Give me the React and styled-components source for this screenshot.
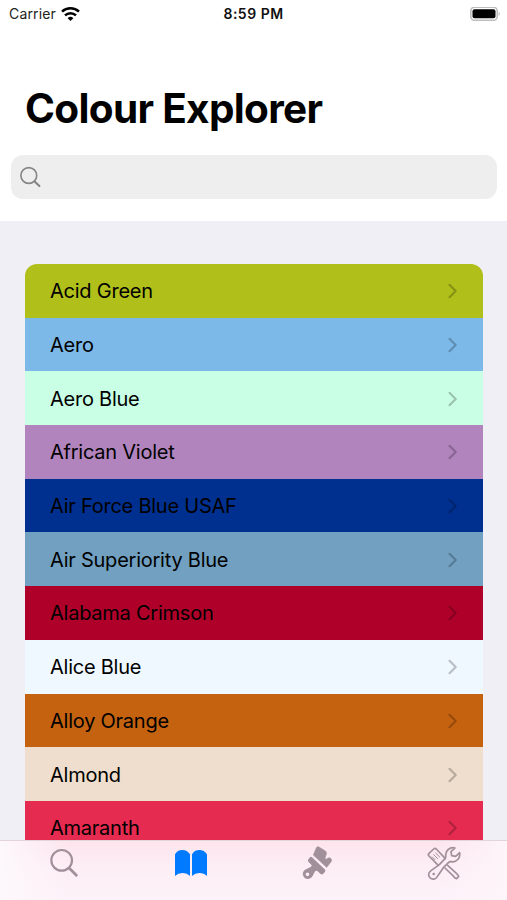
import React from "react";
import styled, { createGlobalStyle } from "styled-components";

const GlobalStyle = createGlobalStyle`
  * {
    box-sizing: border-box;
  }
  body {
    margin: 0;
    font-family: Inter, "Liberation Sans", sans-serif;
    color: #000;
    overflow: hidden;
  }
  svg {
    display: block;
    flex-shrink: 0;
  }
`;

const Screen = styled.div`
  display: flex;
  flex-direction: column;
  width: 100%;
  height: 100vh;
  overflow: hidden;
  background-color: #f0eff5;
`;

const Header = styled.header`
  flex: 0 0 221px;
  background-color: #fff;
`;

const StatusBar = styled.div`
  display: grid;
  grid-template-columns: 1fr auto 1fr;
  align-items: center;
  height: 28px;
  padding: 0 7px 0 9px;
  line-height: 28px;
`;

const Carrier = styled.div`
  display: flex;
  align-items: center;
  gap: 5px;
  font-size: 14px;
  letter-spacing: 0.15px;
  color: #222;
`;

const Clock = styled.div`
  margin-right: 2px;
  font-size: 14px;
  font-weight: 600;
  letter-spacing: 0.5px;
  color: #111;
`;

const Power = styled.div`
  display: flex;
  justify-content: flex-end;
`;

const Title = styled.h1`
  margin: 56px 0 0 25px;
  font-size: 40.5px;
  font-weight: 700;
  line-height: 50px;
  letter-spacing: -0.68px;
  white-space: nowrap;
`;

const SearchField = styled.div`
  display: flex;
  align-items: center;
  height: 44px;
  margin: 21px 10px 0 11px;
  padding-left: 8px;
  border-radius: 12px;
  background-color: #eee;
`;

const List = styled.main`
  flex: 1;
  min-height: 0;
  overflow: hidden;
  padding: 43px 24px 0 25px;
`;

const Rows = styled.div`
  border-radius: 12px 12px 0 0;
  overflow: hidden;
`;

const Row = styled.div`
  display: flex;
  align-items: center;
  justify-content: space-between;
  height: 53.7px;
  padding: 1px 24px 0 25px;
  background-color: ${(props) => props.$color};
`;

const Name = styled.span`
  font-size: 20px;
  line-height: 26px;
  letter-spacing: -0.24px;
  white-space: nowrap;
`;

const TabBar = styled.nav`
  flex: 0 0 60px;
  display: grid;
  grid-template-columns: repeat(4, 1fr);
  justify-items: center;
  align-items: start;
  padding-top: 4px;
  border-top: 1px solid #e3d3da;
  background: linear-gradient(90deg, #fdf8fb 0, rgba(253, 248, 251, 0) 70px, rgba(253, 244, 250, 0) 437px, #fdf5fa 100%),
    linear-gradient(#fde4ed 0, #fdeef5 28px, #fdf2f9 100%);
`;

const Tab = styled.div`
  color: ${(props) => (props.$active ? "#007aff" : "#a18f99")};
`;

const WifiIcon = () => (
  <svg width="19" height="15" viewBox="0 0 57 45" fill="none" stroke="#000" strokeWidth="7.500">
    <path d="M3 14a37 37 0 0 1 51 0" />
    <path d="M12 25a24 24 0 0 1 33 0" />
    <path d="M28.500 42l-8.500-8.500a12 12 0 0 1 17 0z" fill="#000" stroke="none" />
  </svg>
);

const BatteryIcon = () => (
  <svg width="30" height="15" viewBox="0 0 30 15">
    <rect x="0.8" y="0.300" width="26.400" height="13" rx="3.800" fill="#fff" stroke="#bdbdbd" strokeWidth="1.600" />
    <rect x="2.500" y="2.300" width="23" height="9" rx="2" fill="#000" />
    <path d="M28.600 4.700c1.500.6 1.500 3.600 0 4.200z" fill="#b5b5b5" />
  </svg>
);

const FieldSearchIcon = () => (
  <svg width="24" height="24" viewBox="0 0 24 24" fill="none" stroke="#858585" strokeLinecap="round">
    <circle cx="9.800" cy="10.500" r="7.900" strokeWidth="1.600" />
    <path d="M15.600 16.400l4.800 4.700" strokeWidth="2.100" />
  </svg>
);

const Chevron = () => (
  <svg width="12" height="18" viewBox="0 0 12 18" fill="none" stroke="#000" strokeOpacity="0.23" strokeWidth="2.200">
    <path d="M2.500 2.800L8.700 9l-6.200 6.200" strokeLinecap="round" strokeLinejoin="round" />
  </svg>
);

const SearchIcon = () => (
  <svg width="36" height="36" viewBox="0 0 108 108" fill="none" stroke="currentColor" strokeLinecap="round">
    <circle cx="50" cy="46" r="31" strokeWidth="6.500" />
    <path d="M73 70l21 21" strokeWidth="8.500" />
  </svg>
);

const BookIcon = () => (
  <svg width="36" height="36" viewBox="0 0 108 108" fill="currentColor">
    <path d="M9 28Q16 15 31 15t23 13v65Q45 84 31 84 18 84 9 93z" />
    <path d="M60 28Q67 15 82 15t23 13v65Q96 84 82 84 69 84 60 93z" />
  </svg>
);

const BrushIcon = () => (
  <svg width="36" height="36" viewBox="0 0 108 108" fill="currentColor">
    <path
      d="M53 7q4-4 8 0l18 11q5 4 3 9l-4 12q0 5 5 3l5-3q7-2 9 4 2 4-2 9L83 67 43 30z"
      stroke="currentColor"
      strokeWidth="2"
      strokeLinejoin="round"
    />
    <path
      fillRule="evenodd"
      d="M39 37q-3-3-6 0l-5 6q-3 4 0 7l9 9q3 4-2 7l-14 7c-8 4-12 13-8 20 4 10 17 12 25 4 5-5 5-10 9-16 2-4 6-5 9-2l9 8q4 3 8-1l5-6q3-4-1-7zM31 88a5.500 5.500 0 1 1-11 0 5.500 5.500 0 1 1 11 0z"
    />
  </svg>
);

const ToolsIcon = () => (
  <svg
    width="36"
    height="36"
    viewBox="0 0 108 108"
    fill="none"
    stroke="currentColor"
    strokeWidth="5"
    strokeLinecap="round"
    strokeLinejoin="round"
  >
    <path d="M58 41L31 12q-4-4-8 0L9 25q-4 4 0 8l28 28" />
    <path d="M29 24l12 12M23 29l12 12M19 36l8 8" strokeWidth="3" />
    <path d="M65 61l27 25q5 3 6 8l-6 7q-6-1-9-7L57 69" />
    <path d="M87 9C72 5 57 17 59 33q1 5-2 8L40 59 15 77C1 87 11 107 27 101q5-2 8-8l17-25 16-16q3-3 8-2c15 3 28-11 25-27L89 34l-12-2-2-12z" />
    <circle cx="23" cy="87" r="4" fill="currentColor" stroke="none" />
  </svg>
);

const colours = [
  { name: "Acid Green", hex: "#b0bf1a" },
  { name: "Aero", hex: "#7cb9e8" },
  { name: "Aero Blue", hex: "#c9ffe5" },
  { name: "African Violet", hex: "#b284be" },
  { name: "Air Force Blue USAF", hex: "#00308f" },
  { name: "Air Superiority Blue", hex: "#72a0c1" },
  { name: "Alabama Crimson", hex: "#af002a" },
  { name: "Alice Blue", hex: "#f0f8ff" },
  { name: "Alloy Orange", hex: "#c46210" },
  { name: "Almond", hex: "#efdecd" },
  { name: "Amaranth", hex: "#e52b50" },
];

const tabs = [
  { id: "search", Icon: SearchIcon },
  { id: "library", Icon: BookIcon },
  { id: "paint", Icon: BrushIcon },
  { id: "tools", Icon: ToolsIcon },
];

const App = () => (
  <>
    <GlobalStyle />
    <Screen>
      <Header>
        <StatusBar>
          <Carrier>
            Carrier
            <WifiIcon />
          </Carrier>
          <Clock>8:59 PM</Clock>
          <Power>
            <BatteryIcon />
          </Power>
        </StatusBar>
        <Title>Colour Explorer</Title>
        <SearchField>
          <FieldSearchIcon />
        </SearchField>
      </Header>
      <List>
        <Rows>
          {colours.map((colour) => (
            <Row key={colour.name} $color={colour.hex}>
              <Name>{colour.name}</Name>
              <Chevron />
            </Row>
          ))}
        </Rows>
      </List>
      <TabBar>
        {tabs.map(({ id, Icon }) => (
          <Tab key={id} $active={id === "library"}>
            <Icon />
          </Tab>
        ))}
      </TabBar>
    </Screen>
  </>
);

export default App;
